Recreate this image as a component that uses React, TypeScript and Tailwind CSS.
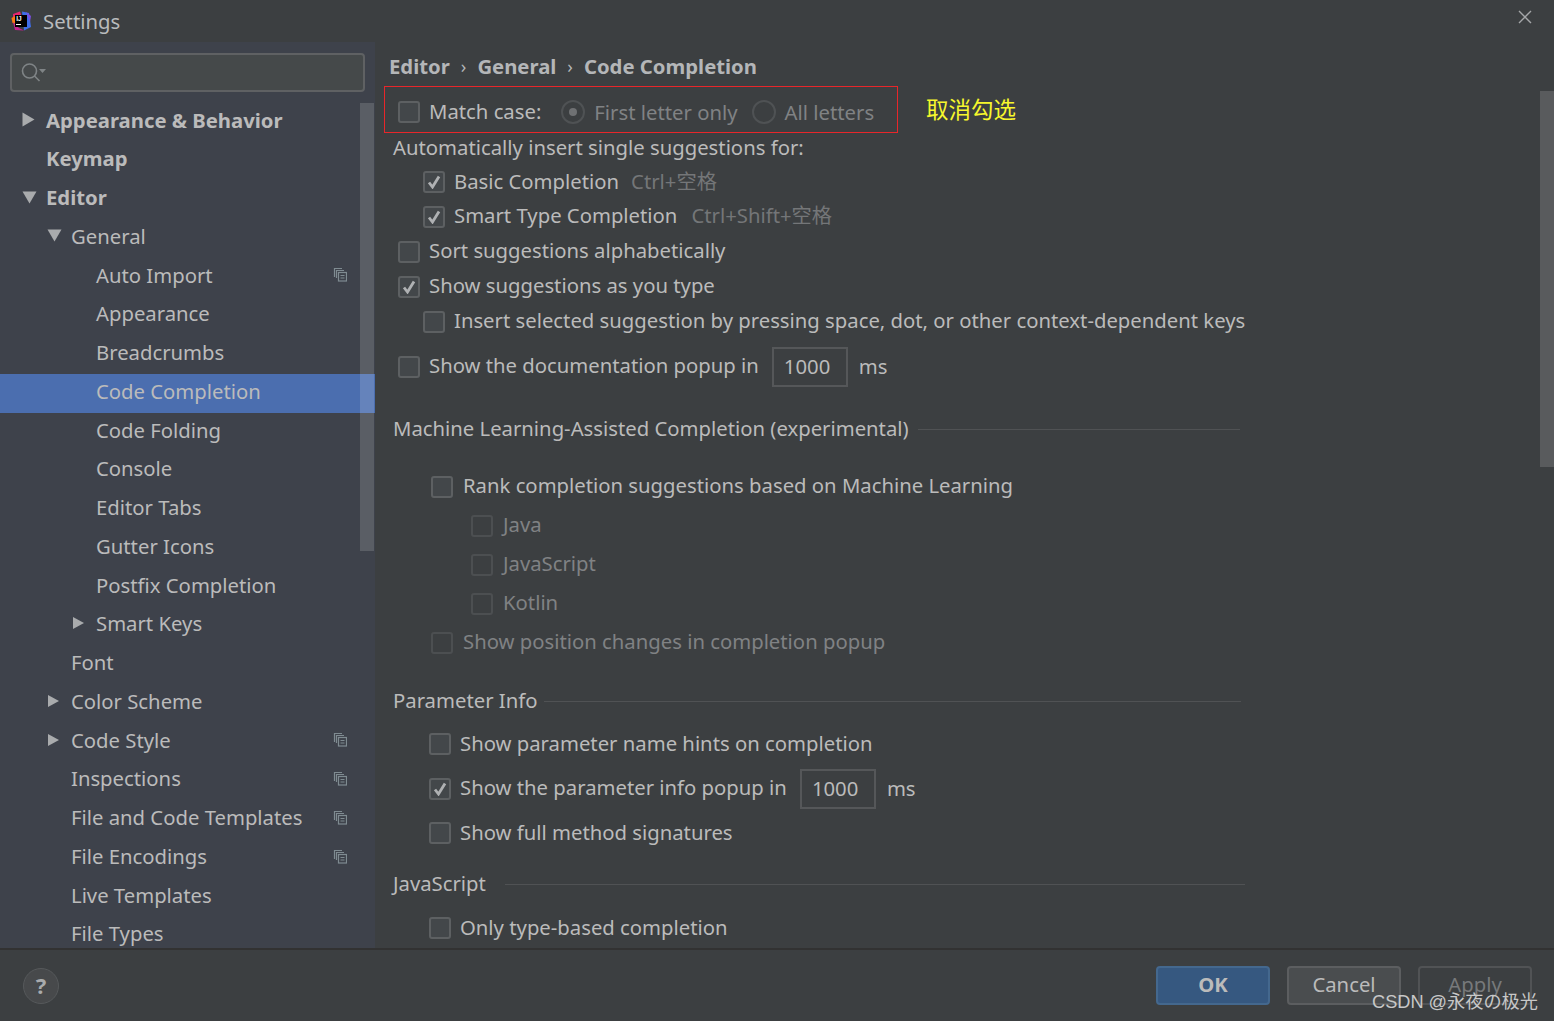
const FONT = "font-['Noto_Sans','Noto_Sans_CJK_SC',sans-serif]";

type NavItem = {
  label: string;
  indent: number;
  arrow?: "right" | "down";
  bold?: boolean;
  copy?: boolean;
  selected?: boolean;
};

const navItems: NavItem[] = [
  { label: "Appearance & Behavior", indent: 0, arrow: "right", bold: true },
  { label: "Keymap", indent: 0, bold: true },
  { label: "Editor", indent: 0, arrow: "down", bold: true },
  { label: "General", indent: 1, arrow: "down" },
  { label: "Auto Import", indent: 2, copy: true },
  { label: "Appearance", indent: 2 },
  { label: "Breadcrumbs", indent: 2 },
  { label: "Code Completion", indent: 2, selected: true },
  { label: "Code Folding", indent: 2 },
  { label: "Console", indent: 2 },
  { label: "Editor Tabs", indent: 2 },
  { label: "Gutter Icons", indent: 2 },
  { label: "Postfix Completion", indent: 2 },
  { label: "Smart Keys", indent: 2, arrow: "right" },
  { label: "Font", indent: 1 },
  { label: "Color Scheme", indent: 1, arrow: "right" },
  { label: "Code Style", indent: 1, arrow: "right", copy: true },
  { label: "Inspections", indent: 1, copy: true },
  { label: "File and Code Templates", indent: 1, copy: true },
  { label: "File Encodings", indent: 1, copy: true },
  { label: "Live Templates", indent: 1 },
  { label: "File Types", indent: 1 },
];

const Logo = () => (
  <svg width="20" height="20" viewBox="0 0 20 20" className="shrink-0">
    <polygon points="2,3 9,0.5 11,7 2,10" fill="#e8256f" />
    <polygon points="0.5,7 4,5 5,13 1.5,12" fill="#f97a12" />
    <polygon points="2,11 8,17 13,19.5 4,19" fill="#c4218f" />
    <polygon points="11,0.5 18,2 20,16 13,19.5" fill="#3f6ee8" />
    <polygon points="15,1 20,5 19,11" fill="#7b4fe0" />
    <rect x="4" y="4" width="12" height="12" fill="#000000" />
    <text x="5.2" y="10.4" fontSize="6.5" fontWeight="700" fill="#ffffff" fontFamily="Liberation Sans">IJ</text>
    <rect x="5" y="13" width="5" height="1" fill="#ffffff" />
  </svg>
);

const Arrow = ({ dir, big }: { dir: "right" | "down"; big?: boolean }) => {
  if (dir === "right") {
    return big ? (
      <svg width="13" height="15" viewBox="0 0 13 15">
        <polygon points="0.5,0.5 12.5,7.5 0.5,14.5" fill="#a9abad" />
      </svg>
    ) : (
      <svg width="13" height="14" viewBox="0 0 13 14">
        <polygon points="1,1 12,7 1,13" fill="#a9abad" />
      </svg>
    );
  }
  return (
    <svg width="15" height="13" viewBox="0 0 15 13">
      <polygon points="0.5,0.5 14.5,0.5 7.5,12.5" fill="#a9abad" />
    </svg>
  );
};

const CopyIcon = () => (
  <svg width="14" height="15" viewBox="0 0 14 15" fill="none" stroke="#7f8b91" strokeWidth="1.2">
    <path d="M9 1.5H1.5V10" />
    <path d="M11 3.5H3.5V11" />
    <rect x="5.5" y="5.5" width="8" height="8.5" fill="#3e424b" />
    <path d="M7.5 8.5h4M7.5 11h4" />
  </svg>
);

const Nav = ({ item }: { item: NavItem }) => {
  const left = ["pl-[46px]", "pl-[71px]", "pl-[96px]"][item.indent];
  const arrowLeft = ["left-[22px]", "left-[47px]", "left-[72px]"][item.indent];
  return (
    <div
      className={`relative flex h-[38.76px] shrink-0 items-center pb-[4px] pr-[28px] ${left} ${
        item.selected ? "bg-[#4b6eaf]" : ""
      } ${item.bold ? "font-bold" : ""}`}
    >
      {item.arrow && (
        <span className={`absolute top-[9px] flex h-[16px] items-center ${arrowLeft}`}>
          <Arrow dir={item.arrow} big={item.indent === 0} />
        </span>
      )}
      <span className="flex-1 whitespace-nowrap">{item.label}</span>
      {item.copy && <CopyIcon />}
    </div>
  );
};

const Check = ({ on, dim }: { on?: boolean; dim?: boolean }) => (
  <span
    className={`flex h-[22px] w-[22px] shrink-0 items-center justify-center rounded-[3px] border-2 ${
      dim ? "border-[#4c4f51] bg-[#3c3f41]" : "border-[#5d6062] bg-[#43474a]"
    }`}
  >
    {on && (
      <svg width="14" height="14" viewBox="0 0 14 14" fill="none">
        <path d="M2 7.5 L5.5 12 L12 1.5" stroke="#afb1b3" strokeWidth="2.8" />
      </svg>
    )}
  </span>
);

const Radio = ({ on }: { on?: boolean }) => (
  <span className="flex h-[24px] w-[24px] shrink-0 items-center justify-center rounded-full border-2 border-[#4f5254]">
    {on && <span className="h-[8px] w-[8px] rounded-full bg-[#6f7173]" />}
  </span>
);

const Option = ({
  h,
  pl,
  on,
  dim,
  gap = "gap-[9px]",
  children,
}: {
  h: string;
  pl: string;
  on?: boolean;
  dim?: boolean;
  gap?: string;
  children: React.ReactNode;
}) => (
  <div className={`flex shrink-0 items-center ${h} ${pl} ${gap}`}>
    <Check on={on} dim={dim} />
    <span className={`whitespace-nowrap pb-[2px] ${dim ? "text-[#808284]" : ""}`}>{children}</span>
  </div>
);

const Section = ({ box, title, gap = "gap-[9px]" }: { box: string; title: string; gap?: string }) => (
  <div className={`flex shrink-0 items-center pl-[13px] ${box} ${gap}`}>
    <span className="whitespace-nowrap pb-[2px]">{title}</span>
    <span className="h-px flex-1 bg-[#505254]" />
  </div>
);

const Num = ({ value }: { value: string }) => (
  <span className="ml-[4px] flex h-[40px] w-[76px] items-center border-2 border-[#555759] pl-[10px]">{value}</span>
);

const FooterButton = ({ label, kind }: { label: string; kind: "ok" | "cancel" | "apply" }) => (
  <button
    className={`h-[39px] w-[114px] rounded-[4px] border-2 pb-[2px] ${
      kind === "ok"
        ? "border-[#44688e] bg-[#365880] font-bold text-[#bbbbbb]"
        : kind === "cancel"
          ? "border-[#5c5e60] bg-[#4a4d4f] text-[#bbbbbb]"
          : "border-[#515355] bg-[#3c3f41] text-[#77797b]"
    }`}
  >
    {label}
  </button>
);

export default function App() {
  return (
    <div className={`relative flex h-[1021px] w-[1554px] flex-col overflow-hidden bg-[#3c3f41] text-[20.3px] text-[#bbbbbb] ${FONT}`}>
      {/* title bar */}
      <div className="flex h-[42px] shrink-0 items-center justify-between pl-[11px] pr-[21px]">
        <div className="flex items-center gap-[12px] text-[#b9bbbd]">
          <Logo />
          <span>Settings</span>
        </div>
        <svg width="16" height="16" viewBox="0 0 16 16" className="mb-[8px]" stroke="#a5a7a9" strokeWidth="1.4">
          <path d="M2 2l12 12M14 2L2 14" />
        </svg>
      </div>

      <div className="flex min-h-0 flex-1">
        {/* sidebar */}
        <div className="relative flex w-[375px] shrink-0 flex-col overflow-hidden bg-[#3e424b]">
          <div className="mx-[10px] mb-[10.5px] mt-[11px] flex h-[39px] shrink-0 items-center rounded-[4px] border-2 border-[#5f6163] bg-[#45494a] pl-[9px]">
            <svg width="26" height="22" viewBox="0 0 26 22" fill="none" stroke="#7f8486" strokeWidth="1.6">
              <circle cx="8.5" cy="9" r="7" />
              <path d="M13.5 14l5 5" />
              <polygon points="18,7 25,7 21.5,11" fill="#7f8486" stroke="none" />
            </svg>
          </div>
          <div className="flex flex-col">
            {navItems.map((item) => (
              <Nav key={item.label} item={item} />
            ))}
          </div>
          <div className="absolute right-[1px] top-[61px] h-[448px] w-[14px] bg-white/15" />
        </div>

        {/* content */}
        <div className="relative flex min-w-0 flex-1 flex-col overflow-hidden pl-[5px]">
          <div className="flex h-[50px] shrink-0 items-center gap-[11px] pb-[2px] pl-[9px] font-bold text-[#b4b6b8]">
            <span>Editor</span>
            <span className="text-[18px] font-normal">›</span>
            <span>General</span>
            <span className="text-[18px] font-normal">›</span>
            <span>Code Completion</span>
          </div>

          <div className="flex h-[40px] shrink-0 items-center pl-[18px]">
            <Check />
            <span className="ml-[9px] whitespace-nowrap pb-[2px]">Match case:</span>
            <span className="ml-[20px]"><Radio on /></span>
            <span className="ml-[9px] whitespace-nowrap text-[#808284]">First letter only</span>
            <span className="ml-[14px]"><Radio /></span>
            <span className="ml-[9px] whitespace-nowrap text-[#808284]">All letters</span>
          </div>
          <div className="flex h-[33px] shrink-0 items-center whitespace-nowrap pb-[2px] pl-[13px]">
            Automatically insert single suggestions for:
          </div>
          <Option h="h-[34px]" pl="pl-[43px]" on>
            Basic Completion<span className="ml-[12px] text-[#747678]">Ctrl+空格</span>
          </Option>
          <Option h="h-[35px]" pl="pl-[43px]" on>
            Smart Type Completion<span className="ml-[14px] text-[#747678]">Ctrl+Shift+空格</span>
          </Option>
          <Option h="h-[35px]" pl="pl-[18px]">Sort suggestions alphabetically</Option>
          <Option h="h-[35px]" pl="pl-[18px]" on>Show suggestions as you type</Option>
          <Option h="h-[35px]" pl="pl-[43px]">
            Insert selected suggestion by pressing space, dot, or other context-dependent keys
          </Option>
          <div className="flex h-[55px] shrink-0 items-center gap-[9px] pl-[18px]">
            <Check />
            <span className="whitespace-nowrap pb-[2px]">Show the documentation popup in</span>
            <Num value="1000" />
            <span className="ml-[2px]">ms</span>
          </div>
          <Section box="mb-[3px] h-[70px] w-[860px]" title="Machine Learning-Assisted Completion (experimental)" />
          <Option h="h-[39px]" pl="pl-[51px]" gap="gap-[10px]">Rank completion suggestions based on Machine Learning</Option>
          <Option h="h-[39px]" pl="pl-[91px]" gap="gap-[10px]" dim>Java</Option>
          <Option h="h-[39px]" pl="pl-[91px]" gap="gap-[10px]" dim>JavaScript</Option>
          <Option h="h-[39px]" pl="pl-[91px]" gap="gap-[10px]" dim>Kotlin</Option>
          <Option h="h-[39px]" pl="pl-[51px]" gap="gap-[10px]" dim>Show position changes in completion popup</Option>
          <Section box="mt-[18px] h-[42px] w-[861px]" title="Parameter Info" gap="gap-[7px]" />
          <Option h="h-[44px]" pl="pl-[49px]">Show parameter name hints on completion</Option>
          <div className="flex h-[45px] shrink-0 items-center gap-[9px] pl-[49px]">
            <Check on />
            <span className="whitespace-nowrap pb-[2px]">Show the parameter info popup in</span>
            <Num value="1000" />
            <span className="ml-[2px]">ms</span>
          </div>
          <Option h="h-[44px]" pl="pl-[49px]">Show full method signatures</Option>
          <Section box="mt-[8px] h-[42px] w-[865px]" title="JavaScript" gap="gap-[19px]" />
          <Option h="h-[46px]" pl="pl-[49px]">Only type-based completion</Option>

          <div className="absolute right-0 top-[49px] h-[376px] w-[14px] bg-white/15" />
        </div>
      </div>

      {/* footer */}
      <div className="flex h-[73px] shrink-0 items-center justify-between border-t-2 border-[#323232] pl-[23px] pr-[22px]">
        <span className="flex h-[36px] w-[36px] items-center justify-center rounded-full border border-[#56595b] bg-[#47494b] text-[22px] font-bold text-[#a9abad]">
          ?
        </span>
        <div className="flex gap-[17px]">
          <FooterButton label="OK" kind="ok" />
          <FooterButton label="Cancel" kind="cancel" />
          <FooterButton label="Apply" kind="apply" />
        </div>
      </div>

      {/* annotations pasted on top of the screenshot */}
      <div className="absolute left-[384px] top-[86px] h-[47px] w-[514px] border border-[#e8262a]" />
      <span className="absolute left-[926px] top-[93px] text-[22.5px] text-[#f7f72c]">取消勾选</span>
      <span className="absolute left-[1372px] top-[989px] font-['Liberation_Sans','Noto_Sans_CJK_SC',sans-serif] text-[18.2px] text-[#c8c8c8]">
        CSDN @永夜の极光
      </span>
    </div>
  );
}
